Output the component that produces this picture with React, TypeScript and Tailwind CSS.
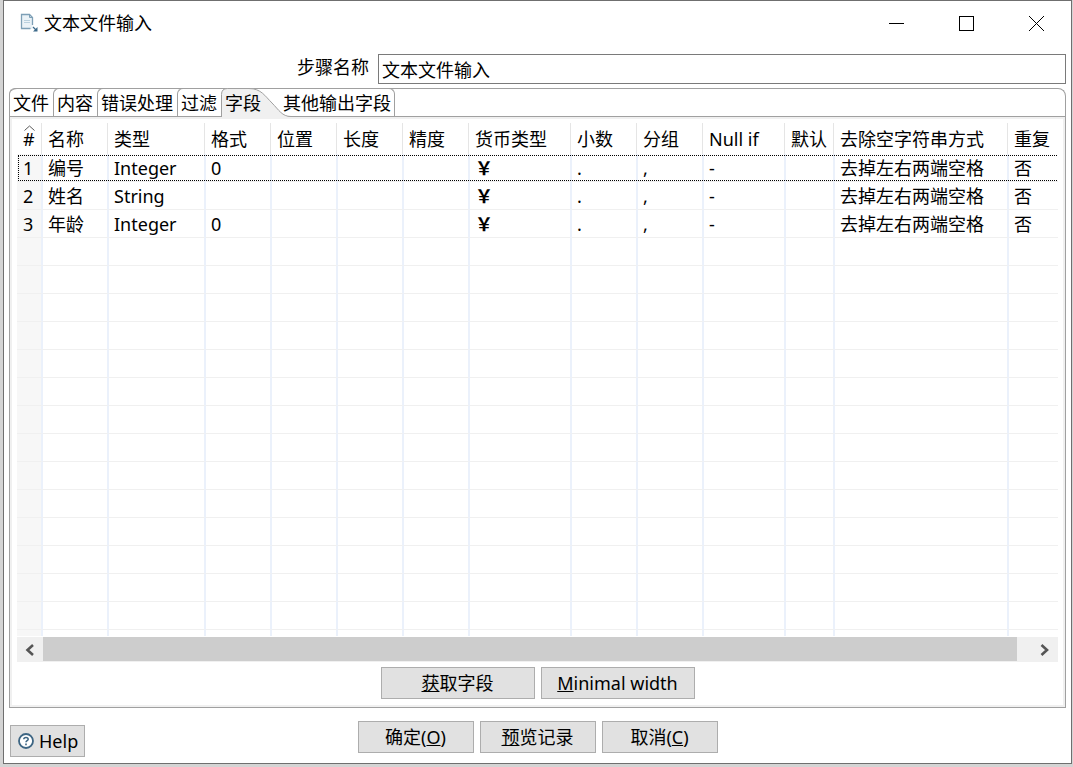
import type { ReactNode } from "react"
import clsx from "clsx"

const columns = [
  { title: "#", width: "w-[26px]" },
  { title: "名称", width: "w-[66px]" },
  { title: "类型", width: "w-[97px]" },
  { title: "格式", width: "w-[66px]" },
  { title: "位置", width: "w-[66px]" },
  { title: "长度", width: "w-[66px]" },
  { title: "精度", width: "w-[66px]" },
  { title: "货币类型", width: "w-[102px]" },
  { title: "小数", width: "w-[66px]" },
  { title: "分组", width: "w-[66px]" },
  { title: "Null if", width: "w-[82px]" },
  { title: "默认", width: "w-[49px]" },
  { title: "去除空字符串方式", width: "w-[174px]" },
  { title: "重复", width: "" },
]

const fields = [
  ["1", "编号", "Integer", "0", "", "", "", "￥", ".", ",", "-", "", "去掉左右两端空格", "否"],
  ["2", "姓名", "String", "", "", "", "", "￥", ".", ",", "-", "", "去掉左右两端空格", "否"],
  ["3", "年龄", "Integer", "0", "", "", "", "￥", ".", ",", "-", "", "去掉左右两端空格", "否"],
]

const emptyRow = columns.map(() => "")
const rows = [...fields, ...Array.from({ length: 14 }, () => emptyRow)]

function DialogButton({ className, children }: { className?: string; children: ReactNode }) {
  return (
    <button
      type="button"
      className={clsx("h-8 border border-[#adadad] bg-[#e1e1e1] text-center leading-7 whitespace-nowrap", className)}
    >
      {children}
    </button>
  )
}

function Tab({ className, children }: { className?: string; children: ReactNode }) {
  return (
    <button
      type="button"
      role="tab"
      aria-selected={false}
      className={clsx(
        "-mt-px h-7 rounded-tl-md border-t border-l border-[#a0a0a0] pl-[3px] text-left leading-7 whitespace-nowrap",
        className,
      )}
    >
      {children}
    </button>
  )
}

function TitleBar() {
  return (
    <header className="flex h-11 items-center pl-4">
      <svg className="size-5 shrink-0" viewBox="0 0 20 20" fill="none">
        <path d="M1 1.500h8.500l3 3v11.500H1z" fill="#eaf2f7" />
        <path d="M12.500 12V4.500l-3-3H1.500v14h9" stroke="#7d9fb6" strokeWidth="1.300" />
        <path d="M9.500 1.500v3h3" stroke="#7d9fb6" />
        <path d="M4 7.500h6M4 9.500h6" stroke="#b9d0de" strokeWidth="1.200" />
        <path d="M13 14l3 3" stroke="#3d6a8a" strokeWidth="1.200" />
        <path d="M17.500 14v4.500H13z" fill="#3d6a8a" />
      </svg>
      <h1 className="ml-1 flex-1">文本文件输入</h1>
      <button type="button" aria-label="Minimize" className="flex h-full w-[70px] items-center justify-center">
        <svg width="15" height="15" viewBox="0 0 15 15" shapeRendering="crispEdges">
          <path d="M0 7.500h15" stroke="#000" />
        </svg>
      </button>
      <button type="button" aria-label="Maximize" className="flex h-full w-[70px] items-center justify-center">
        <svg width="15" height="15" viewBox="0 0 15 15" shapeRendering="crispEdges">
          <path d="M.5 .5h14v14H.5z" fill="none" stroke="#000" />
        </svg>
      </button>
      <button type="button" aria-label="Close" className="flex h-full w-[70px] items-center justify-center">
        <svg width="15" height="15" viewBox="0 0 15 15">
          <path d="M0 0l15 15M15 0L0 15" stroke="#000" />
        </svg>
      </button>
    </header>
  )
}

function TabStrip() {
  return (
    <div role="tablist" className="flex h-7 rounded-t-lg border-t border-r border-[#a0a0a0]">
      <Tab className="w-11">文件</Tab>
      <Tab className="w-11">内容</Tab>
      <Tab className="w-20">错误处理</Tab>
      <Tab className="w-11">过滤</Tab>
      <button type="button" role="tab" aria-selected className="relative -mt-px h-7 w-[62px] pl-1 text-left leading-[30px]">
        {/* Swooping edge runs under the next tab */}
        <svg className="absolute top-0 left-0 h-[29px] w-[70px]" viewBox="0 0 70 29">
          <path d="M.5 29V6.500Q.5 .5 6.500 .5H28C40 .5 44 8 51 15C58 22 61 28.500 70 28.500V29z" fill="#f0f0f0" />
          <path
            d="M.5 29V6.500Q.5 .5 6.500 .5H28C40 .5 44 8 51 15C58 22 61 28.500 70 28.500"
            fill="none"
            stroke="#a0a0a0"
          />
        </svg>
        <span className="relative">字段</span>
      </button>
      <button
        type="button"
        role="tab"
        aria-selected={false}
        className="relative -mt-px h-7 w-[112px] rounded-tr-md border-t border-r border-[#a0a0a0] text-left leading-7 whitespace-nowrap"
      >
        其他输出字段
      </button>
    </div>
  )
}

function FieldsTable() {
  return (
    <div className="overflow-hidden">
      <table className="w-[calc(100%+8px)] table-fixed border-separate border-spacing-0 text-left">
        <thead>
          <tr>
            {columns.map((column, index) => (
              <th key={column.title} scope="col" className={clsx("relative h-[31px] p-0 font-normal", column.width)}>
                {index === 0 && (
                  <svg className="absolute top-[2px] left-[7px] h-[6px] w-[11px]" viewBox="0 0 11 6">
                    <path d="M.5 5.500l5-4.500 5 4.500" fill="none" stroke="#5a5a5a" />
                  </svg>
                )}
                <div
                  className={clsx(
                    "mr-px h-[31px] border-r border-[#e5e5e5] leading-8 whitespace-nowrap",
                    index === 0 ? "pl-1.5" : "pl-[5px]",
                  )}
                >
                  {column.title}
                </div>
              </th>
            ))}
          </tr>
        </thead>
        <tbody>
          {rows.map((row, rowIndex) => (
            <tr
              key={rowIndex}
              className={clsx(rowIndex === 0 && "outline-1 -outline-offset-2 outline-black outline-dotted")}
            >
              {row.map((value, index) => (
                <td
                  key={index}
                  className={clsx(
                    "h-7 border-r-2 border-b border-r-[#ebf1fb] border-b-[#f0f0f0] p-0 pt-px leading-[26px] whitespace-nowrap",
                    index === 0 ? "bg-[#f7f7f7] pl-1.5" : "pl-[5px]",
                    index === 7 && "font-bold",
                  )}
                >
                  {value}
                </td>
              ))}
            </tr>
          ))}
        </tbody>
        {/* Cut-off row above the scroll bar */}
        <tfoot aria-hidden="true">
          <tr>
            {columns.map((column, index) => (
              <td
                key={column.title}
                className={clsx("h-1.5 border-r-2 border-[#ebf1fb] p-0", index === 0 && "bg-[#f7f7f7]")}
              />
            ))}
          </tr>
        </tfoot>
      </table>
    </div>
  )
}

function ScrollBar() {
  return (
    <div className="mt-px flex h-[25px] bg-[#f0f0f0]">
      <button type="button" aria-label="Scroll left" className="flex w-[26px] items-center justify-center">
        <svg width="10" height="12" viewBox="0 0 10 12">
          <path d="M8 1L2.500 6l5.500 5" fill="none" stroke="#555" strokeWidth="2.600" />
        </svg>
      </button>
      <div className="mr-[15px] h-6 flex-1 bg-[#cdcdcd]" />
      <button type="button" aria-label="Scroll right" className="flex w-[26px] items-center justify-center">
        <svg width="10" height="12" viewBox="0 0 10 12">
          <path d="M1.500 1L7 6l-5.500 5" fill="none" stroke="#555" strokeWidth="2.600" />
        </svg>
      </button>
    </div>
  )
}

export default function App() {
  return (
    <div className="bg-[#d4d4d4] pr-px pb-[3px] pl-[3px] font-['Noto_Sans','Noto_Sans_CJK_SC',sans-serif] text-[18px] text-black">
      <main className="border border-[#6f6f6f] bg-white">
        <TitleBar />

        {/* Step name */}
        <div className="flex gap-[9px] pt-[9px] pr-[5px] pl-1.5">
          <label htmlFor="step-name" className="w-[34%] text-right leading-[26px]">
            步骤名称
          </label>
          <input
            id="step-name"
            type="text"
            defaultValue="文本文件输入"
            className="h-[30px] min-w-0 flex-1 border border-[#7a7a7a] px-[3px] outline-none"
          />
        </div>

        {/* Tab folder */}
        <div className="mx-[5px] mt-1">
          <TabStrip />
          <div className="border border-[#a0a0a0]">
            <div className="border-2 border-[#f0f0f0] px-[5px] pt-1 pb-1.5">
              <FieldsTable />
              <ScrollBar />
              <div className="mt-[5px] flex justify-center gap-1.5">
                <DialogButton className="w-[154px]">
                  <u>获</u>取字段
                </DialogButton>
                <DialogButton className="w-[154px]">
                  <u>M</u>inimal width
                </DialogButton>
              </div>
            </div>
          </div>
        </div>

        {/* Dialog buttons */}
        <div className="grid grid-cols-[1fr_auto_1fr] items-start px-1.5 pt-[13px] pb-1.5">
          <DialogButton className="mt-1 flex w-[75px] items-center gap-[5px] pl-[7px]">
            <svg className="size-4 shrink-0" viewBox="0 0 16 16" fill="none">
              <circle cx="8" cy="8" r="7" fill="#fff" stroke="#3d6583" strokeWidth="1.800" />
              <path
                d="M5.800 6.200C5.800 3.800 10.200 3.800 10.200 6.200C10.200 7.600 8 7.600 8 9.200"
                stroke="#3d6583"
                strokeWidth="1.500"
              />
              <path d="M8 10.600v1.600" stroke="#3d6583" strokeWidth="1.600" />
            </svg>
            Help
          </DialogButton>
          <div className="flex gap-1.5">
            <DialogButton className="w-[116px]">
              确定(<u>O</u>)
            </DialogButton>
            <DialogButton className="w-[116px]">
              <u>预</u>览记录
            </DialogButton>
            <DialogButton className="w-[116px]">
              取消(<u>C</u>)
            </DialogButton>
          </div>
        </div>
      </main>
    </div>
  )
}
